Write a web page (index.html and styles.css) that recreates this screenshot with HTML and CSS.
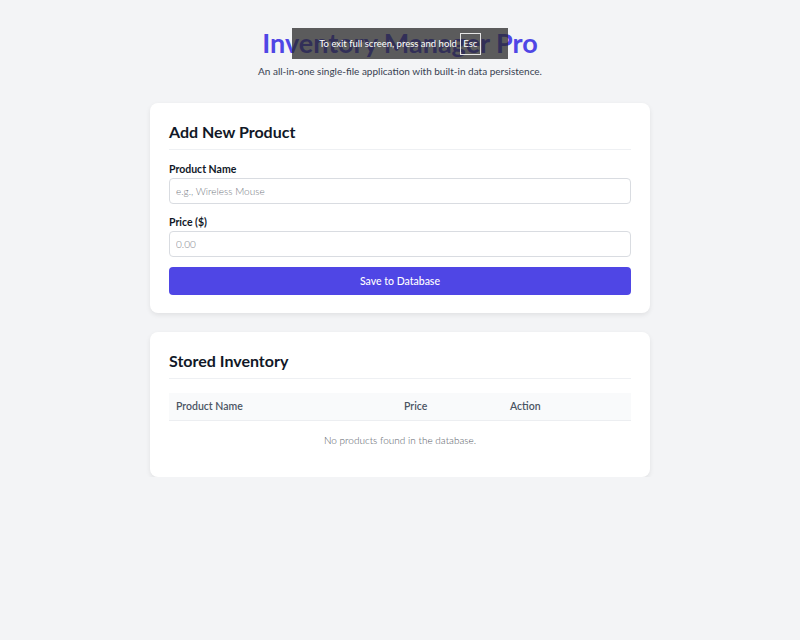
FILE: index.html
```html
<!DOCTYPE html>
<html lang="en">
<head>
<meta charset="utf-8">
<title>Inventory Manager Pro</title>
<link rel="stylesheet" href="styles.css">
</head>
<body>
<div class="page">
  <header class="hero">
    <h1 class="title">Inventory Manager Pro</h1>
    <p class="subtitle">An all-in-one single-file application with built-in data persistence.</p>
  </header>

  <section class="card">
    <h2 class="card-title">Add New Product</h2>
    <form class="form">
      <label class="label" for="name">Product Name</label>
      <input class="input" id="name" type="text" placeholder="e.g., Wireless Mouse">
      <label class="label" for="price">Price ($)</label>
      <input class="input" id="price" type="text" placeholder="0.00">
      <button class="btn" type="button">Save to Database</button>
    </form>
  </section>

  <section class="card">
    <h2 class="card-title">Stored Inventory</h2>
    <table class="table">
      <thead>
        <tr>
          <th class="col-name">Product Name</th>
          <th class="col-price">Price</th>
          <th class="col-action">Action</th>
        </tr>
      </thead>
      <tbody>
        <tr><td class="empty" colspan="3">No products found in the database.</td></tr>
      </tbody>
    </table>
  </section>
</div>
<div class="fs-toast">To exit full screen, press and hold <span class="key">Esc</span></div>
</body>
</html>
```
FILE: styles.css
```css
* { box-sizing: border-box; }
html, body { margin: 0; padding: 0; }
body {
  background: #f3f4f6;
  font-family: "Lato", "Noto Sans", sans-serif;
  color: #1f2937;
}
.page {
  width: 500px;
  margin: 0 auto;
  padding-top: 26px;
  display: flex;
  flex-direction: column;
  gap: 19px;
}
.hero { text-align: center; margin-bottom: 6px; }
.title {
  margin: 0;
  font-size: 27px;
  line-height: 34px;
  font-weight: 700;
  color: #4f46e5;
}
.subtitle {
  margin: 4px 0 0;
  font-size: 10px;
  line-height: 14px;
  color: #374151;
}
.card {
  background: #fff;
  border-radius: 8px;
  padding: 19px 19px 18px;
  box-shadow: 0 2px 5px rgba(0,0,0,0.08);
}
.card-title {
  margin: 0 0 12px;
  padding-bottom: 7px;
  border-bottom: 1px solid #eef0f3;
  font-size: 16px;
  line-height: 20px;
  font-weight: 700;
  color: #111827;
}
.stored .card-title { margin-bottom: 13px; }
.form { display: flex; flex-direction: column; }
.label {
  font-size: 10.5px;
  line-height: 15px;
  font-weight: 700;
  color: #111827;
  margin-bottom: 1px;
}
.input + .label { margin-top: 1px; }
.input {
  height: 26px;
  border: 1px solid #d9dce1;
  border-radius: 4px;
  padding: 0 6px;
  font-family: inherit;
  font-size: 10px;
  font-weight: 300;
  margin-bottom: 10px;
  color: #111827;
}
.input::placeholder { color: #757a83; }
.btn {
  height: 28px;
  border: 0;
  border-radius: 4px;
  background: #4f46e5;
  color: #fff;
  font-family: inherit;
  font-size: 10.5px;
  font-weight: 500;
}
.table {
  width: 100%;
  border-collapse: collapse;
  margin-top: 14px;
  font-size: 10.5px;
}
.table th {
  background: #f9fafb;
  height: 27px;
  padding: 0 7px;
  text-align: left;
  font-weight: 600;
  color: #4b5563;
  border-bottom: 1px solid #eceef1;
}
.col-name { width: 228px; }
.col-price { width: 106px; }
.empty {
  text-align: center;
  color: #555b66;
  font-size: 10px;
  font-weight: 300;
  padding: 12px 0;
  line-height: 14px;
}
.fs-toast {
  position: absolute;
  top: 28px;
  left: 292px;
  width: 216px;
  height: 31px;
  background: rgba(40,40,40,0.75);
  color: #fff;
  font-size: 9.5px;
  display: flex;
  align-items: center;
  justify-content: center;
  gap: 3px;
}
.key {
  border: 1px solid #e5e5e5;
  width: 21px;
  height: 22px;
  display: flex;
  align-items: center;
  justify-content: center;
}
```
